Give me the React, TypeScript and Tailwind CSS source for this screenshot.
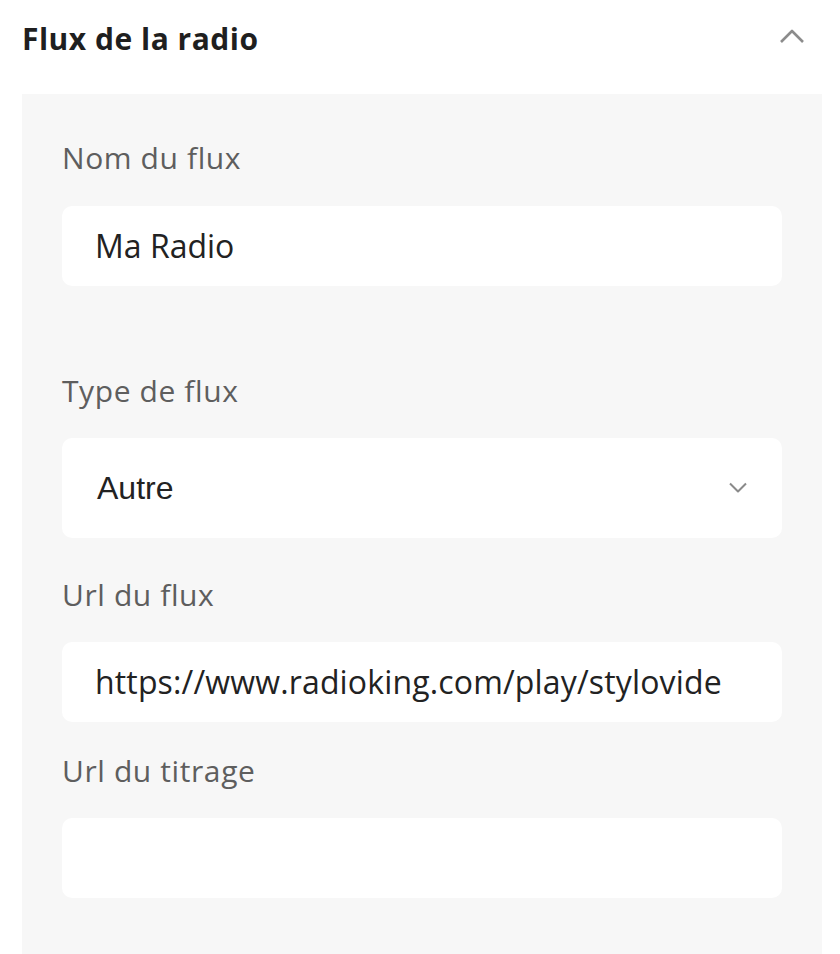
import React from "react";

const font = { fontFamily: "'Open Sans', Lato, sans-serif" };

const Label = ({ children, className = "" }: { children: React.ReactNode; className?: string }) => (
  <div className={`text-[30px] leading-[36px] tracking-[0.6px] text-[#5e5e5e] ${className}`}>{children}</div>
);

const App = () => {
  return (
    <div className="w-[840px] h-[954px] bg-white overflow-hidden" style={font}>
      <div className="flex justify-between items-start pl-[22px] pr-[35px] pt-[21px] h-[94px]">
        <h1 className="text-[30px] leading-[36px] font-bold tracking-[0.5px] text-[#1f1f1f]">Flux de la radio</h1>
        <svg width="26" height="16" viewBox="0 0 26 16" className="mt-[7px]" fill="none">
          <path d="M2 14L13 3L24 14" stroke="#8c8c8c" strokeWidth="2.6" strokeLinejoin="round" />
        </svg>
      </div>
      <div className="ml-[22px] w-[800px] h-[860px] bg-[#f7f7f7] px-[40px] pt-[46px]">
        <Label>Nom du flux</Label>
        <div className="mt-[30px] h-[80px] bg-white rounded-[10px] flex items-center px-[33px] text-[32px] text-[#222]">
          Ma Radio
        </div>

        <Label className="mt-[87px]">Type de flux</Label>
        <div
          className="mt-[29px] h-[100px] bg-white rounded-[10px] flex items-center justify-between pl-[35px] pr-[35px] text-[32px] text-[#222]"
          style={{ fontFamily: "'Liberation Sans', Arial, sans-serif" }}
        >
          <span>Autre</span>
          <svg width="18" height="12" viewBox="0 0 18 12" fill="none">
            <path d="M1 1.5L9 9.5L17 1.5" stroke="#8a8a8a" strokeWidth="2" strokeLinejoin="round" />
          </svg>
        </div>

        <Label className="mt-[39px]">Url du flux</Label>
        <div className="mt-[29px] h-[80px] bg-white rounded-[10px] flex items-center px-[33px] text-[32px] tracking-[0.15px] text-[#222]">
          https://www.radioking.com/play/stylovide
        </div>

        <Label className="mt-[31px]">Url du titrage</Label>
        <div className="mt-[29px] h-[80px] bg-white rounded-[10px]" />
      </div>
    </div>
  );
};

export default App;
